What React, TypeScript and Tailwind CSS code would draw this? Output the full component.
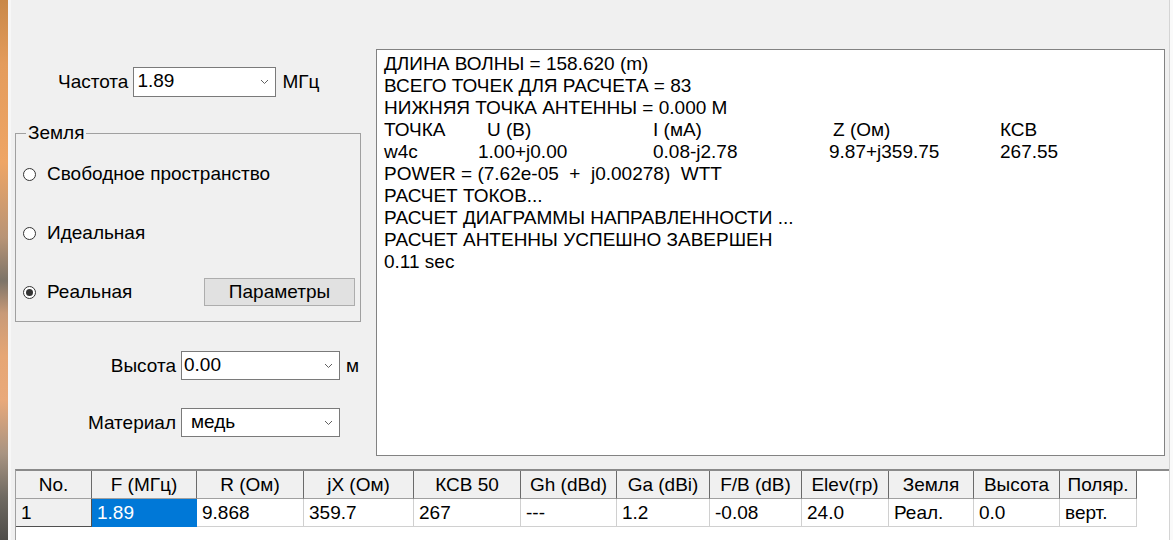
import React from "react";

type Col = { title: string; value: string; w: string; selected?: boolean; rowHead?: boolean };

// Result grid columns: header text, first-row value, fixed width
const columns: Col[] = [
  { title: "No.", value: "1", w: "w-[76px]", rowHead: true },
  { title: "F (МГц)", value: "1.89", w: "w-[105px]", selected: true },
  { title: "R (Ом)", value: "9.868", w: "w-[107px]" },
  { title: "jX (Ом)", value: "359.7", w: "w-[110px]" },
  { title: "КСВ 50", value: "267", w: "w-[107px]" },
  { title: "Gh (dBd)", value: "---", w: "w-[96px]" },
  { title: "Ga (dBi)", value: "1.2", w: "w-[93px]" },
  { title: "F/B (dB)", value: "-0.08", w: "w-[92px]" },
  { title: "Elev(гр)", value: "24.0", w: "w-[87px]" },
  { title: "Земля", value: "Реал.", w: "w-[85px]" },
  { title: "Высота", value: "0.0", w: "w-[86px]" },
  { title: "Поляр.", value: "верт.", w: "w-[77px]" },
];

function Chevron() {
  return (
    <svg width="9" height="6" viewBox="0 0 9 6" className="shrink-0">
      <path d="M1 1 L4.5 4.5 L8 1" fill="none" stroke="#606060" strokeWidth="1" />
    </svg>
  );
}

function Combo({ value, className, textPad }: { value: string; className: string; textPad: string }) {
  return (
    <div className={`flex items-center bg-white border border-[#7a7a7a] pr-[6px] ${className}`}>
      <span className={`flex-1 leading-[22px] -mt-[2px] ${textPad}`}>{value}</span>
      <Chevron />
    </div>
  );
}

function Radio({ checked }: { checked?: boolean }) {
  return (
    <span className="flex h-[13px] w-[13px] shrink-0 items-center justify-center rounded-full border border-[#333333] bg-white">
      {checked && <span className="h-[7px] w-[7px] rounded-full bg-[#333333]" />}
    </span>
  );
}

export default function App() {
  return (
    <div className="flex h-[540px] w-[1173px] overflow-hidden font-['Liberation_Sans',Arial,sans-serif] text-[19px] text-black">
      {/* desktop wallpaper peeking at the left edge */}
      <div className="w-[8px] shrink-0 bg-[linear-gradient(to_bottom,#c98848_0%,#e49c5c_12%,#eea565_30%,#b89476_44%,#7d7468_52%,#c89a78_58%,#e6a674_66%,#e9a97a_74%,#a89482_84%,#6f6a62_92%,#4e4c48_100%)]" />
      <div className="w-[3px] shrink-0 bg-[#f7f7f7]" />

      {/* application window */}
      <div className="flex min-w-0 flex-1 flex-col border-r border-[#d4d4d4] bg-[#f0f0f0]">
        <div className="flex h-[469px] shrink-0">
          {/* left column: frequency, ground, height, material */}
          <div className="ml-[4px] flex w-[346px] shrink-0 flex-col">
            <div className="mt-[67px] flex h-[30px] items-center">
              <span className="ml-[43px] leading-[22px]">Частота</span>
              <Combo value="1.89" className="ml-[5px] h-[30px] w-[143px]" textPad="pl-[3px]" />
              <span className="ml-[6px] leading-[22px]">МГц</span>
            </div>

            <fieldset className="mt-[25px] w-[346px] border border-[#a0a0a0] pb-[15px]">
              <legend className="ml-[10px] px-[2px] leading-[22px]">Земля</legend>
              <div className="mt-[16px] flex flex-col gap-[31px]">
                <div className="flex h-[28px] items-center pl-[7px]">
                  <Radio />
                  <span className="ml-[11px] leading-[22px]">Свободное пространство</span>
                </div>
                <div className="flex h-[28px] items-center pl-[7px]">
                  <Radio />
                  <span className="ml-[11px] leading-[22px]">Идеальная</span>
                </div>
                <div className="flex h-[28px] items-center pl-[7px]">
                  <Radio checked />
                  <span className="ml-[11px] leading-[22px]">Реальная</span>
                  <button className="ml-auto mr-[5px] flex h-[28px] w-[151px] items-center justify-center border border-[#adadad] bg-[#e1e1e1] leading-[22px]">
                    Параметры
                  </button>
                </div>
              </div>
            </fieldset>

            <div className="mt-[29px] flex h-[29px] items-center">
              <span className="w-[161px] text-right leading-[22px]">Высота</span>
              <Combo value="0.00" className="ml-[5px] h-[29px] w-[159px]" textPad="pl-[2px]" />
              <span className="ml-[6px] leading-[22px]">м</span>
            </div>

            <div className="mt-[28px] flex h-[29px] items-center">
              <span className="w-[161px] text-right leading-[22px]">Материал</span>
              <Combo value="медь" className="ml-[5px] h-[29px] w-[159px]" textPad="pl-[9px]" />
            </div>
          </div>

          {/* calculation log */}
          <div className="ml-[15px] mt-[49px] h-[407px] w-[789px] shrink-0 border border-[#828282] bg-white pl-[7px] pt-[3px] leading-[22px]">
            <div>ДЛИНА ВОЛНЫ = 158.620 (m)</div>
            <div>ВСЕГО ТОЧЕК ДЛЯ РАСЧЕТА = 83</div>
            <div>НИЖНЯЯ ТОЧКА АНТЕННЫ = 0.000 М</div>
            <div className="flex whitespace-nowrap">
              <span className="w-[103px]">ТОЧКА</span>
              <span className="w-[166px]">U (В)</span>
              <span className="w-[180px]">I (мА)</span>
              <span className="w-[167px]">Z (Ом)</span>
              <span>КСВ</span>
            </div>
            <div className="flex whitespace-nowrap">
              <span className="w-[94px]">w4c</span>
              <span className="w-[175px]">1.00+j0.00</span>
              <span className="w-[176px]">0.08-j2.78</span>
              <span className="w-[171px]">9.87+j359.75</span>
              <span>267.55</span>
            </div>
            <div className="whitespace-pre">POWER = (7.62e-05  +  j0.00278)  WTT</div>
            <div>РАСЧЕТ ТОКОВ...</div>
            <div>РАСЧЕТ ДИАГРАММЫ НАПРАВЛЕННОСТИ ...</div>
            <div>РАСЧЕТ АНТЕННЫ УСПЕШНО ЗАВЕРШЕН</div>
            <div>0.11 sec</div>
          </div>
        </div>

        {/* results grid */}
        <div className="ml-[4px] flex-1 border-l border-t-2 border-l-[#a0a0a0] border-t-[#8a8a8a] bg-white">
          <div className="flex">
            {columns.map((c) => (
              <div
                key={c.title}
                className={`${c.w} flex h-[28px] shrink-0 items-center justify-center border-b border-r border-b-[#a0a0a0] border-r-[#6a6a6a] bg-[#f0f0f0] leading-[22px]`}
              >
                {c.title}
              </div>
            ))}
          </div>
          <div className="flex">
            {columns.map((c) => (
              <div
                key={c.title}
                className={`${c.w} flex h-[28px] shrink-0 items-center pl-[5px] leading-[22px] ${
                  c.rowHead
                    ? "border-b border-r border-[#505050] bg-[#f0f0f0]"
                    : c.selected
                    ? "border-b border-r border-[#0078d7] bg-[#0078d7] text-white"
                    : "border-b border-r border-[#d0d0d0] bg-white"
                }`}
              >
                {c.value}
              </div>
            ))}
          </div>
        </div>
      </div>
      <div className="w-[3px] shrink-0 bg-[#fafafa]" />
    </div>
  );
}
